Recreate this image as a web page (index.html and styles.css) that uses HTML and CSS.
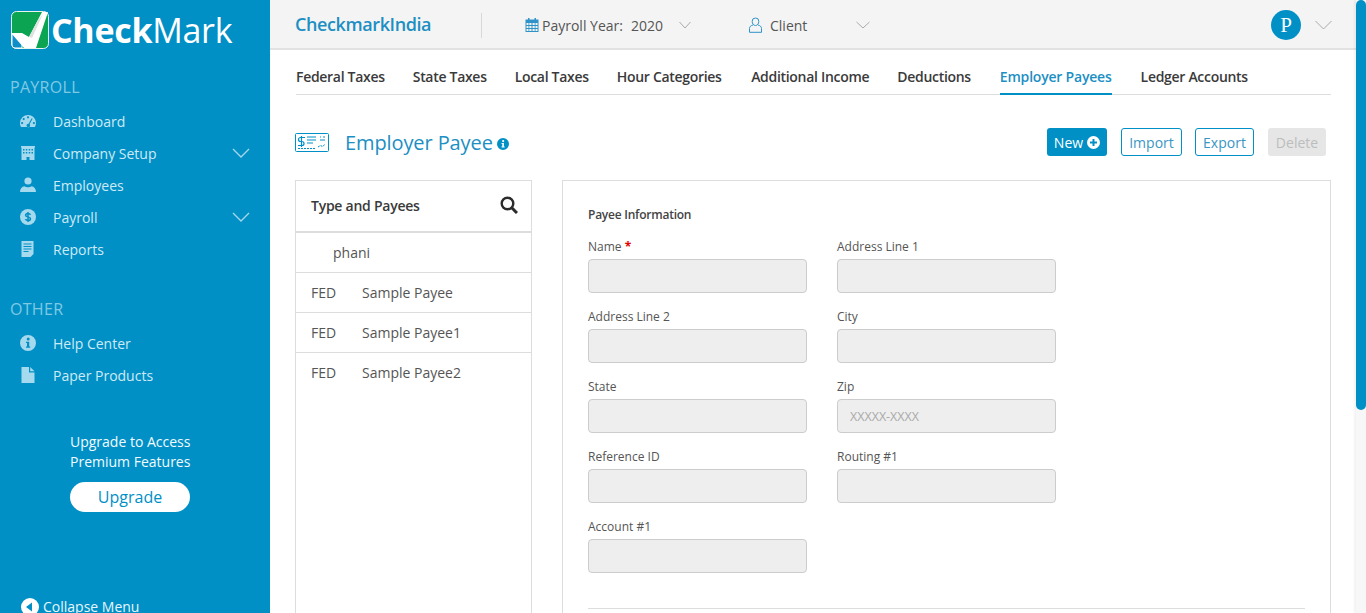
FILE: index.html
```html
<!DOCTYPE html>
<html lang="en">
<head>
  <meta charset="UTF-8">
  <title>Employer Payee</title>
  <link rel="stylesheet" href="styles.css">
</head>
<body>
  <div class="app">
    <aside class="sidebar">
      <div class="brand">
        <svg class="brand-mark" width="38" height="38" viewBox="0 0 38 38">
          <rect x="0.5" y="0.5" width="37" height="37" rx="5" fill="#0aa452" stroke="#e8f5ee"/>
          <path d="M1 23h10v14H4a3 3 0 0 1-3-3z" fill="#0f8fc8" stroke="#fff"/>
          <path d="M0 22h11l7 4L31 1h6L25 37H13z" fill="#fff"/>
          <path d="M18 26l3 1 11-24-5 6z" fill="#dfe3df"/>
        </svg>
        <span class="brand-name"><b>Check</b>Mark</span>
      </div>

      <div class="nav-title">PAYROLL</div>
      <ul class="nav">
        <li>
          <svg class="nav-icon" viewBox="0 0 16 16"><path fill-rule="evenodd" d="M8 2a8 8 0 0 0-8 8c0 1.600.4 3 1.100 4h13.800A8 8 0 0 0 8 2zM8 3.200a1.100 1.100 0 1 1 0 2.200 1.100 1.100 0 0 1 0-2.200zM3.700 5a1.100 1.100 0 1 1 0 2.200 1.100 1.100 0 0 1 0-2.200zM2.100 9a1.100 1.100 0 1 1 0 2.200 1.100 1.100 0 0 1 0-2.200zM13.900 9a1.100 1.100 0 1 1 0 2.200 1.100 1.100 0 0 1 0-2.200zM11.700 5.300l.9.500-3 5.400a1.800 1.800 0 1 1-1-.5z"/></svg>
          <span>Dashboard</span>
        </li>
        <li>
          <svg class="nav-icon" viewBox="0 0 16 16"><path fill-rule="evenodd" d="M1 1h14v1.500h-.5V15H9.500v-3h-3v3H1.500V2.500H1zM3 4v1.500h1.500V4zM5.800 4v1.500h1.500V4zM8.700 4v1.500h1.500V4zM11.500 4v1.500H13V4zM3 7v1.500h1.500V7zM5.800 7v1.500h1.500V7zM8.700 7v1.500h1.500V7zM11.500 7v1.500H13V7z"/></svg>
          <span>Company Setup</span>
          <svg class="nav-chevron" width="18" height="10" viewBox="0 0 18 10"><path d="M1 1l8 8 8-8"/></svg>
        </li>
        <li>
          <svg class="nav-icon" viewBox="0 0 16 16"><circle cx="8" cy="4" r="3.600"/><path d="M0 15c0-3.500 2-5.500 4.500-5.800C5.500 10 6.700 10.300 8 10.300s2.500-.3 3.500-1.100C14 9.500 16 11.500 16 15z"/></svg>
          <span>Employees</span>
        </li>
        <li>
          <svg class="nav-icon" viewBox="0 0 16 16"><circle cx="8" cy="8" r="8"/><path class="nav-icon-cut" d="M10.500 5.800C10 4.900 9 4.500 8 4.500c-1.300 0-2.400.6-2.400 1.800 0 2.500 4.900 1.100 4.900 3.500 0 1.100-1.200 1.800-2.500 1.800-1.100 0-2.100-.5-2.600-1.400M8 3v10"/></svg>
          <span>Payroll</span>
          <svg class="nav-chevron" width="18" height="10" viewBox="0 0 18 10"><path d="M1 1l8 8 8-8"/></svg>
        </li>
        <li>
          <svg class="nav-icon" viewBox="0 0 16 16"><path fill-rule="evenodd" d="M1.500 0h12v13l-3 3h-9zM3.500 2.500v1h8v-1zM3.500 5v1h8V5zM3.500 7.500v1h8v-1zM3.500 10v1h5v-1z"/></svg>
          <span>Reports</span>
        </li>
      </ul>

      <div class="nav-title nav-title-other">OTHER</div>
      <ul class="nav">
        <li>
          <svg class="nav-icon" viewBox="0 0 16 16"><path fill-rule="evenodd" d="M8 0a8 8 0 1 1 0 16A8 8 0 0 1 8 0zM8.200 2.600a1.500 1.500 0 1 0 0 3 1.500 1.500 0 0 0 0-3zM6 6.800v1.300h1v3.300H6v1.300h4.200v-1.300h-1V6.800z"/></svg>
          <span>Help Center</span>
        </li>
        <li>
          <svg class="nav-icon" viewBox="0 0 16 16"><path d="M1.500 0h7.500v5.500h5.500V16h-13zM10.200 0l4.300 4.300h-4.300z"/></svg>
          <span>Paper Products</span>
        </li>
      </ul>

      <div class="upgrade">
        <p>Upgrade to Access<br>Premium Features</p>
        <button class="upgrade-btn">Upgrade</button>
      </div>

      <div class="collapse">
        <svg width="18" height="18" viewBox="0 0 18 18"><circle cx="9" cy="9" r="9" fill="#fff"/><path d="M5 9l6-4.500v9z" fill="#0090c6"/></svg>
        <span>Collapse Menu</span>
      </div>
    </aside>

    <div class="main">
      <header class="topbar">
        <div class="company">CheckmarkIndia</div>
        <div class="year">
          <svg width="14" height="14" viewBox="0 0 14 14" class="top-icon"><path fill="#2f93c9" fill-rule="evenodd" d="M3 0h1.500v1.500h5V0H11v1.500h2.500V14H.5V1.500H3zM1.500 5v2h2V5zM4.300 5v2h2.200V5zM7.500 5v2h2.200V5zM10.500 5v2h2V5zM1.500 8v2h2V8zM4.300 8v2h2.200V8zM7.500 8v2h2.200V8zM10.500 8v2h2V8zM1.500 11v2h2v-2zM4.300 11v2h2.200v-2zM7.500 11v2h2.200v-2zM10.500 11v2h2v-2z"/></svg>
          <span class="year-label">Payroll Year:</span>
          <span class="year-value">2020</span>
          <svg class="top-chevron" width="12" height="8" viewBox="0 0 12 8"><path d="M.5 1L6 7l5.500-6"/></svg>
        </div>
        <div class="client">
          <svg width="13" height="16" viewBox="0 0 13 16" class="top-icon"><path fill="none" stroke="#2f93c9" d="M6.500 1a3.300 3.300 0 0 1 3.300 3.500c0 2-1.300 4-3.300 4s-3.300-2-3.300-4A3.300 3.300 0 0 1 6.500 1zM4 8c-2 .5-3.500 1.500-3.500 3.500v3.800h12v-3.800C12.500 9.500 11 8.500 9 8"/></svg>
          <span class="client-label">Client</span>
          <svg class="top-chevron" width="14" height="8" viewBox="0 0 14 8"><path d="M.5 1L7 7l6.500-6"/></svg>
        </div>
        <div class="account">
          <div class="avatar">P</div>
          <svg class="top-chevron" width="17" height="10" viewBox="0 0 17 10"><path d="M.5 1l8 8 8-8"/></svg>
        </div>
      </header>

      <div class="content">
        <nav class="tabs">
          <a>Federal Taxes</a>
          <a>State Taxes</a>
          <a>Local Taxes</a>
          <a>Hour Categories</a>
          <a class="tab-wide">Additional Income</a>
          <a>Deductions</a>
          <a class="active">Employer Payees</a>
          <a class="tab-last">Ledger Accounts</a>
        </nav>

        <div class="page-head">
          <svg class="check-icon" width="34" height="19" viewBox="0 0 34 19" fill="none" stroke="#0090c6">
            <rect x="0.500" y="0.500" width="33" height="18" rx="1"/>
            <path d="M10 4.500H5.500a1.500 1.500 0 0 0 0 4h1.500a1.500 1.500 0 0 1 0 4H3M6.500 3v11" stroke-width="1.200"/>
            <path d="M12 4h9M12 7h9M12 10h6M25 4h1M28 4h2M25 7h5" stroke-width="1.200"/>
            <path d="M3 15.500h17M23 14l2.500-1.500 2 1 3-2.500" stroke-dasharray="2 1"/>
          </svg>
          <h1>Employer Payee</h1>
          <svg class="info" width="12" height="12" viewBox="0 0 16 16"><path fill="#0090c6" fill-rule="evenodd" d="M8 0a8 8 0 1 1 0 16A8 8 0 0 1 8 0zM8.200 2.600a1.500 1.500 0 1 0 0 3 1.500 1.500 0 0 0 0-3zM6 6.800v1.300h1v3.300H6v1.300h4.200v-1.300h-1V6.800z"/></svg>
          <div class="actions">
            <button class="btn btn-new">New
              <svg width="13" height="13" viewBox="0 0 13 13"><path fill="#fff" fill-rule="evenodd" d="M6.500 0a6.500 6.500 0 1 1 0 13 6.500 6.500 0 0 1 0-13zM5.500 3v2.500H3v2h2.500V10h2V7.500H10v-2H7.500V3z"/></svg>
            </button>
            <button class="btn btn-line btn-import">Import</button>
            <button class="btn btn-line btn-export">Export</button>
            <button class="btn btn-off">Delete</button>
          </div>
        </div>

        <div class="panels">
          <section class="list-panel">
            <div class="list-head">
              <span>Type and Payees</span>
              <svg width="18" height="18" viewBox="0 0 18 18" fill="none" stroke="#2b2b2b"><circle cx="7.500" cy="7.500" r="5.800" stroke-width="2.400"/><path d="M12 12l5 5" stroke-width="3"/></svg>
            </div>
            <div class="list-row list-row-solo">phani</div>
            <div class="list-row"><span class="row-type">FED</span>Sample Payee</div>
            <div class="list-row"><span class="row-type">FED</span>Sample Payee1</div>
            <div class="list-row"><span class="row-type">FED</span>Sample Payee2</div>
          </section>

          <section class="form-panel">
            <h2>Payee Information</h2>
            <form class="form-grid">
              <div class="field"><label>Name <em>*</em></label><input type="text" disabled></div>
              <div class="field"><label>Address Line 1</label><input type="text" disabled></div>
              <div class="field"><label>Address Line 2</label><input type="text" disabled></div>
              <div class="field"><label>City</label><input type="text" disabled></div>
              <div class="field"><label>State</label><input type="text" disabled></div>
              <div class="field"><label>Zip</label><input type="text" placeholder="XXXXX-XXXX" disabled></div>
              <div class="field"><label>Reference ID</label><input type="text" disabled></div>
              <div class="field"><label>Routing #1</label><input type="text" disabled></div>
              <div class="field"><label>Account #1</label><input type="text" disabled></div>
            </form>
            <div class="form-rule"></div>
          </section>
        </div>
      </div>
    </div>

    <div class="scrollbar"><div class="scrollbar-thumb"></div></div>
  </div>
</body>
</html>
```

FILE: styles.css
```css
* { box-sizing: border-box; }
html, body { height: 100%; margin: 0; overflow: hidden; }
body { font-family: "Open Sans", sans-serif; font-size: 14px; color: #444; background: #fff; }
ul { list-style: none; margin: 0; padding: 0; }
button { font-family: inherit; cursor: pointer; }

.app { display: flex; height: 613px; overflow: hidden; }

/* sidebar */
.sidebar { flex: 0 0 270px; height: 613px; background: #0090c6; color: #cfeaf5; overflow: hidden; }
.brand { display: flex; align-items: center; height: 38px; margin: 11px 0 0 11px; }
.brand-mark { flex: none; }
.brand-name { margin-left: 2px; font-size: 34px; line-height: 38px; color: #fff; letter-spacing: -0.3px; }
.brand-name b { font-weight: 700; }
.nav-title { margin: 27px 0 0 10px; font-size: 16px; line-height: 22px; color: #80c9e4; letter-spacing: 0.3px; }
.nav-title-other { margin-top: 33px; }
.nav { margin-top: 7px; }
.nav li { display: flex; align-items: center; height: 32px; padding-left: 20px; }
.nav-icon { width: 16px; height: 16px; margin-right: 17px; fill: #a5d9ed; flex: none; }
.nav-icon-cut { fill: none; stroke: #0090c6; stroke-width: 1.500; }
.nav-chevron { margin-left: auto; margin-right: 20px; fill: none; stroke: #a5d9ed; stroke-width: 1.300; }

.upgrade { margin: 41px 0 0 70px; width: 120px; color: #f2fafd; }
.upgrade p { margin: 0; line-height: 20px; white-space: nowrap; }
.upgrade-btn { display: block; width: 120px; height: 30px; margin-top: 10px; padding: 0; border: 0; border-radius: 15px; background: #fff; color: #0090c6; font-size: 16px; }
.collapse { display: flex; align-items: center; gap: 4px; margin: 85px 0 0 21px; color: #e8f6fb; line-height: 20px; white-space: nowrap; }

/* header */
.main { flex: 1; min-width: 0; }
.topbar { display: flex; align-items: center; height: 50px; padding: 2px 0 0 25px; background: #f4f4f4; border-bottom: 2px solid #e2e2e2; color: #555; }
.company { width: 187px; height: 25px; font-size: 18px; font-weight: 600; line-height: 23px; color: #1c8fc3; border-right: 1px solid #d8d8d8; white-space: nowrap; letter-spacing: -0.4px; }
.year, .client { display: flex; align-items: center; }
.top-icon { flex: none; }
.year { width: 224px; margin-left: 43px; }
.year-label { margin-left: 3px; }
.year-value { margin-left: 8px; }
.top-chevron { fill: none; stroke: #aaa; margin-left: 16px; flex: none; }
.client-label { width: 86px; margin-left: 8px; }
.client .top-chevron { margin-left: 0; }
.account { display: flex; align-items: center; margin-left: auto; margin-right: 24px; }
.avatar { width: 30px; height: 30px; border-radius: 50%; background: #0090c6; color: #fff; font-family: "Liberation Serif", serif; font-size: 21px; line-height: 30px; text-align: center; }
.account .top-chevron { margin-left: 14px; }

/* content */
.content { padding: 0 25px 0 25px; }
.tabs { display: flex; gap: 28px; height: 45px; margin-left: 1px; border-bottom: 1px solid #ddd; }
.tabs a { height: 45px; font-weight: 600; line-height: 54px; color: #3a3a3a; letter-spacing: -0.3px; white-space: nowrap; }
.tabs a.tab-wide { margin-left: 1.5px; }
.tabs a.active { margin-left: 1px; color: #1c8fc3; letter-spacing: -0.2px; border-bottom: 2px solid #0090c6; }
.tabs a.tab-last { margin-left: 1px; }

.page-head { display: flex; align-items: center; height: 28px; margin-top: 33px; }
.check-icon { flex: none; }
.page-head h1 { margin: 0 0 0 16px; font-size: 20px; font-weight: 400; color: #1c8fc3; letter-spacing: -0.1px; white-space: nowrap; }
.info { margin: 3px 0 0 4px; }
.actions { display: flex; margin-left: auto; margin-right: 5px; }
.btn { height: 28px; padding: 0; border-radius: 3px; font-size: 14px; }
.btn-new { display: flex; align-items: center; justify-content: center; gap: 4px; width: 60px; border: 0; background: #0090c6; color: #fff; }
.btn-line { border: 1px solid #0090c6; background: #fff; color: #3a96c4; }
.btn-import { width: 61px; margin-left: 14px; }
.btn-export { width: 59px; margin-left: 13px; }
.btn-off { width: 58px; margin-left: 14px; border: 0; background: #e6e6e6; color: #bdbdbd; }

.panels { display: flex; gap: 30px; margin-top: 24px; }
.list-panel { flex: 0 0 237px; height: 500px; border: 1px solid #ddd; }
.list-head { display: flex; align-items: center; justify-content: space-between; height: 52px; padding: 0 13px 2px 15px; border-bottom: 2px solid #ddd; font-weight: 600; letter-spacing: -0.25px; color: #3a3a3a; }
.list-row { height: 40px; padding-left: 15px; line-height: 39px; border-bottom: 1px solid #ddd; color: #555; white-space: nowrap; }
.list-row:last-child { border-bottom: 0; }
.list-row-solo { padding-left: 37px; }
.row-type { display: inline-block; width: 51px; }

.form-panel { flex: 1; height: 500px; padding: 26px 25px 0; border: 1px solid #ddd; }
.form-panel h2 { margin: 0 0 16px; font-size: 12px; font-weight: 600; letter-spacing: -0.24px; line-height: 16px; color: #444; }
.form-grid { display: grid; grid-template-columns: 219px 219px; column-gap: 30px; row-gap: 16px; }
.field label { display: block; height: 16px; margin-bottom: 4px; font-size: 12px; line-height: 16px; color: #555; }
.field em { font-style: normal; font-weight: 700; color: #e60000; }
.field input { display: block; width: 219px; height: 34px; padding: 0 12px; border: 1px solid #ccc; border-radius: 4px; background: #eee; font-family: inherit; font-size: 12.5px; }
.field input::placeholder { color: #aaa; }
.form-rule { margin-top: 35px; border-top: 1px solid #ddd; }

/* page scrollbar */
.scrollbar { flex: 0 0 10px; height: 613px; background: #f7f7f7; box-shadow: -2px 0 2px rgba(0,0,0,0.05); }
.scrollbar-thumb { height: 410px; background: #0090c6; border-radius: 5px; }
```
